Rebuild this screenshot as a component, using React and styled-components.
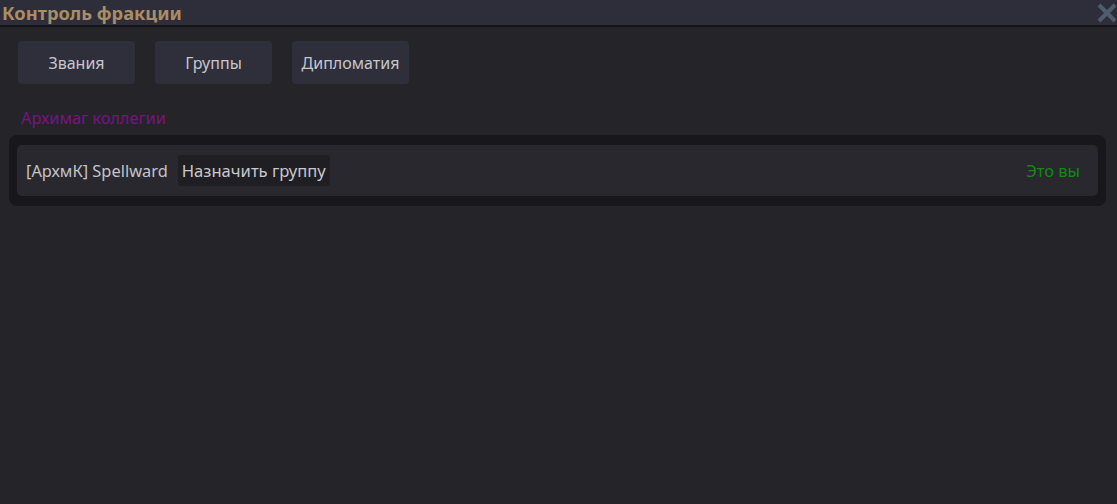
import React from "react";
import styled, { createGlobalStyle } from "styled-components";

const Global = createGlobalStyle`
  html, body {
    margin: 0;
    padding: 0;
    background: #252429;
  }
  body {
    font-family: "Noto Sans", "Open Sans", sans-serif;
  }
`;

const Window = styled.div`
  width: 1117px;
  height: 504px;
  background: #252429;
  display: flex;
  flex-direction: column;
  overflow: hidden;
`;

const TitleBar = styled.div`
  height: 25px;
  background: #2e2e3a;
  border-bottom: 2px solid #151419;
  display: flex;
  align-items: center;
  justify-content: space-between;
  padding-left: 2px;
`;

const Title = styled.div`
  font-size: 18.3px;
  font-weight: 700;
  color: #ab8d63;
  line-height: 25px;
`;

const Close = styled.button`
  width: 24px;
  height: 24px;
  padding: 0;
  border: none;
  background: transparent;
  display: flex;
  align-items: center;
  justify-content: center;
  margin-right: -2px;
`;

const Body = styled.div`
  padding: 14px 11px 0 9px;
  display: flex;
  flex-direction: column;
`;

const Tabs = styled.div`
  display: flex;
  gap: 20px;
  padding-left: 9px;
`;

const Tab = styled.button`
  width: 117px;
  height: 43px;
  border: none;
  border-radius: 4px;
  background: #2f2f3c;
  color: #c6c6cb;
  font-family: inherit;
  font-size: 16px;
  padding: 0;
`;

const RankName = styled.div`
  margin-top: 24px;
  padding-left: 12px;
  font-size: 16.3px;
  color: #7b1284;
  line-height: 20px;
`;

const RankBox = styled.div`
  margin-top: 7px;
  background: #18171c;
  border-radius: 8px;
  padding: 10px 8px;
`;

const Member = styled.div`
  height: 51px;
  background: #29282e;
  border-radius: 5px;
  display: flex;
  align-items: center;
  padding: 0 18px 0 9px;
`;

const MemberName = styled.span`
  font-size: 16.4px;
  color: #c3c3c8;
`;

const AssignButton = styled.button`
  margin-left: 10px;
  height: 31px;
  padding: 0 4px;
  border: none;
  border-radius: 3px;
  background: #1f1e23;
  color: #c8c8cc;
  font-family: inherit;
  font-size: 16.6px;
`;

const You = styled.span`
  margin-left: auto;
  font-size: 16.4px;
  color: #128a12;
`;

export default function App() {
  return (
    <>
      <Global />
      <Window>
        <TitleBar>
          <Title>Контроль фракции</Title>
          <Close aria-label="Закрыть">
            <svg width="22" height="22" viewBox="0 0 22 22">
              <path d="M3 3 L19 19 M19 3 L3 19" stroke="#4e5d6e" strokeWidth="4" />
            </svg>
          </Close>
        </TitleBar>
        <Body>
          <Tabs>
            <Tab>Звания</Tab>
            <Tab>Группы</Tab>
            <Tab>Дипломатия</Tab>
          </Tabs>
          <RankName>Архимаг коллегии</RankName>
          <RankBox>
            <Member>
              <MemberName>[АрхмК] Spellward</MemberName>
              <AssignButton>Назначить группу</AssignButton>
              <You>Это вы</You>
            </Member>
          </RankBox>
        </Body>
      </Window>
    </>
  );
}
